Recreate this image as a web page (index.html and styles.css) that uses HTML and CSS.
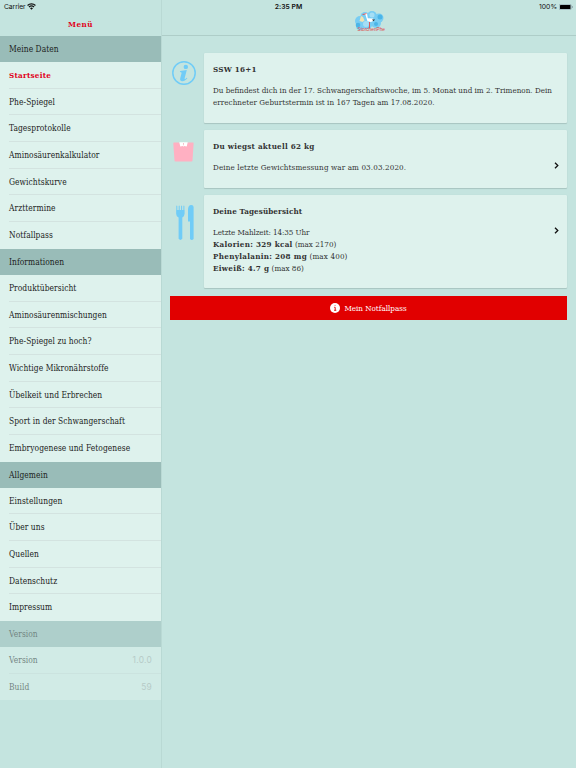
FILE: index.html
```html
<!DOCTYPE html>
<html lang="de">
<head>
  <meta charset="UTF-8">
  <meta name="viewport" content="width=device-width, initial-scale=1.0">
  <title>StorchenPhe</title>
  <link rel="stylesheet" href="styles.css">
</head>
<body>
  <div class="status">
    <span class="carrier">Carrier
      <svg class="wifi" viewBox="0 0 16 12"><path d="M1 4.2a10 10 0 0 1 14 0M3.5 7a6.4 6.4 0 0 1 9 0" fill="none" stroke="#111" stroke-width="2.2"/><path d="M5.4 9a3.7 3.7 0 0 1 5.2 0L8 11.8z" fill="#111"/></svg>
    </span>
    <span class="time">2:35 PM</span>
    <span class="battery">100%
      <svg viewBox="0 0 28 12"><rect x=".5" y=".5" width="24" height="11" rx="2.5" fill="none" stroke="#789"/><rect x="2" y="2" width="21" height="8" rx="1" fill="#000"/><path d="M26 4q3 2 0 4z" fill="#678"/></svg>
    </span>
  </div>

  <div class="app">
    <aside class="menu">
      <header class="bar"><h1>Menü</h1></header>
      <h2>Meine Daten</h2>
      <ul>
        <li class="active"><span>Startseite</span></li>
        <li><span>Phe-Spiegel</span></li>
        <li><span>Tagesprotokolle</span></li>
        <li><span>Aminosäurenkalkulator</span></li>
        <li><span>Gewichtskurve</span></li>
        <li><span>Arzttermine</span></li>
        <li><span>Notfallpass</span></li>
      </ul>
      <h2>Informationen</h2>
      <ul>
        <li><span>Produktübersicht</span></li>
        <li><span>Aminosäurenmischungen</span></li>
        <li><span>Phe-Spiegel zu hoch?</span></li>
        <li><span>Wichtige Mikronährstoffe</span></li>
        <li><span>Übelkeit und Erbrechen</span></li>
        <li><span>Sport in der Schwangerschaft</span></li>
        <li><span>Embryogenese und Fetogenese</span></li>
      </ul>
      <h2>Allgemein</h2>
      <ul>
        <li><span>Einstellungen</span></li>
        <li><span>Über uns</span></li>
        <li><span>Quellen</span></li>
        <li><span>Datenschutz</span></li>
        <li><span>Impressum</span></li>
      </ul>
      <div class="disabled">
        <h2>Version</h2>
        <ul>
          <li><span>Version</span><em>1.0.0</em></li>
          <li><span>Build</span><em>59</em></li>
        </ul>
      </div>
    </aside>

    <main>
      <header class="bar">
        <svg class="logo" viewBox="0 0 32 22">
          <g fill="#78cdf3"><circle cx="6" cy="10" r="5"/><circle cx="11" cy="5.5" r="4.5"/><circle cx="18" cy="5" r="5"/><circle cx="25" cy="7" r="4.5"/><circle cx="22" cy="12" r="5"/><circle cx="13" cy="12" r="6"/><circle cx="6" cy="15" r="4"/></g>
          <g fill="#4bb5e8"><circle cx="26" cy="6" r="2.5"/><circle cx="4" cy="14" r="2.3"/><circle cx="22" cy="13" r="2"/></g>
          <g fill="#a5def5"><circle cx="18" cy="4" r="2.5"/><circle cx="12" cy="13" r="3"/></g>
          <path d="M7 5l2 1 1.500 3.500-2 1.500-3-1z" fill="#efe3b4"/>
          <path d="M10.500 2l2.500.2.800 5 5.200.3 1 2-3 1.500-3.500-.8L11.500 4z" fill="#fff"/>
          <path d="M18 8.500h3l-1.500 1.800z" fill="#222"/>
          <path d="M8.500 3.600l4-1M15.500 11v6" stroke="#e34b4b" stroke-width=".9" fill="none"/>
          <text x="3.500" y="19.500" textLength="27.500" lengthAdjust="spacingAndGlyphs">StorchenPhe</text>
        </svg>
      </header>

      <div class="content">
        <section class="entry">
          <svg class="icon info" viewBox="0 0 24 24"><circle cx="12" cy="12" r="11.2" fill="none" stroke="#70ccf7" stroke-width="1.500"/><circle cx="13.800" cy="5.900" r="2.200" fill="#70ccf7"/><path d="M8.200 10l6.600-.9-2.100 8q-.3 1.400.6.900l1.500-1.300.6.600c-2 2.300-3.800 3.200-5.500 2.900-2-.3-2-1.900-1.600-3.300l1.300-4.800-.5-.9-1.200-.1z" fill="#70ccf7"/></svg>
          <div class="card">
            <h3>SSW 16+1</h3>
            <p><span class="line">Du befindest dich in der 17. Schwangerschaftswoche, im 5. Monat und im 2. Trimenon. Dein</span>
            <span class="line due">errechneter Geburtstermin ist in 167 Tagen am 17.08.2020.</span></p>
          </div>
        </section>

        <section class="entry weight">
          <svg class="icon scale" viewBox="0 0 21 20"><path d="M1 .5h5.500l1 3.300h6l1-3.300H20q.8 0 .6 1l-1.100 17q-.1 1-1 1h-16q-1 0-1-1L.3 1.500Q.2.500 1 .5z" fill="#ffb0c2"/><path d="M6.300.2h8.400l-1 4.400-2.600-.7-.6.800-.6-.8-2.600.7z" fill="#fff"/><path d="M10.100 1.200l.4 2.800.5-2.800z" fill="#ef91a8"/></svg>
          <div class="card">
            <h3>Du wiegst aktuell 62 kg</h3>
            <p><span class="line measured">Deine letzte Gewichtsmessung war am 03.03.2020.</span></p>
            <svg class="arrow" viewBox="0 0 5 7"><path d="M1 .7l2.800 2.800L1 6.300"/></svg>
          </div>
        </section>

        <section class="entry meals">
          <svg class="icon cutlery" viewBox="0 0 18 36"><path d="M.3 1q.5-1 1 0v5.500h1.400V1q.5-1 1 0v5.500h1.400V1q.5-1 1 0v5.500h1.300V1q.5-1 1 0v8.500q0 2-2.100 3v21.300q-1.900 2.200-3.700 0V12.500Q.3 11.500.3 9.500zM17.600 34q-1.800 2.200-3.600 0V16.500h-2V5q0-5 3.200-5 2.400 0 2.400 2z" fill="#70ccf7"/><path d="M.5 5h7.800v4H.5z" fill="#70ccf7"/></svg>
          <div class="card">
            <h3>Deine Tagesübersicht</h3>
            <p>
              <span class="line last-meal">Letzte Mahlzeit: 14:35 Uhr</span>
              <span class="line"><b>Kalorien: 329 kcal</b> (max 2170)</span>
              <span class="line max"><b>Phenylalanin: 208 mg</b> (max 400)</span>
              <span class="line"><b>Eiweiß: 4.7 g</b> (max 86)</span>
            </p>
            <svg class="arrow" viewBox="0 0 5 7"><path d="M1 .7l2.800 2.800L1 6.300"/></svg>
          </div>
        </section>

        <button class="pass">
          <svg viewBox="0 0 10 10"><circle cx="5" cy="5" r="5" fill="#fff"/><path d="M4.200 4.300h1v3M4.100 7.300h2.200M4.700 2.400h.7" fill="none" stroke="#e10000" stroke-width=".9"/></svg>
          <span>Mein Notfallpass</span>
        </button>
      </div>
    </main>
  </div>
</body>
</html>
```
FILE: styles.css
```css
* { box-sizing: border-box; }
body { margin: 0; height: 768px; overflow: hidden; background: #c4e4df; color: #1c1c1c; font-family: "DejaVu Serif Condensed", "DejaVu Serif", serif; font-stretch: condensed; font-size: 8px; }
h1, h2, h3, p, ul { margin: 0; padding: 0; font-size: inherit; }

.status { position: absolute; top: 0; left: 0; right: 0; display: grid; grid-template-columns: 1fr 1fr 1fr; padding: 0 3px 0 4px; height: 12px; line-height: 13px; font-family: Inter, sans-serif; font-stretch: normal; font-size: 6.8px; color: #111; }
.carrier { letter-spacing: -.1px; }
.wifi { width: 9px; height: 7px; vertical-align: -1px; }
.time { text-align: center; font-weight: 600; letter-spacing: .05px; }
.battery { text-align: right; }
.battery svg { width: 14px; height: 6px; vertical-align: -1px; }

.app { display: flex; height: 768px; }
.bar { height: 36px; display: flex; justify-content: center; }
.menu { width: 161px; flex: none; font-size: 8.4px; letter-spacing: .05px; }
.menu h1 { color: #e00019; font-size: 8px; line-height: 12px; padding-top: 18px; letter-spacing: .5px; }
.menu h2 { height: 26px; line-height: 27px; padding-left: 9px; background: #99bcb8; font-weight: normal; }
.menu ul { list-style: none; background: #def2ed; padding-left: 9px; }
.menu li { height: 26.7px; line-height: 27.4px; display: flex; justify-content: space-between; padding-right: 9px; border-bottom: 1px solid #d3e3e0; }
.menu li:last-child { border-bottom: 0; }
.menu .active { color: #e00019; font-weight: bold; font-size: 8px; letter-spacing: .25px; }
.menu em { font-family: Inter, sans-serif; font-stretch: normal; font-style: normal; color: #888; opacity: .6; letter-spacing: .25px; }
.disabled { opacity: .5; }

main { flex: 1; border-left: 1px solid #b9d9d4; }
main .bar { border-bottom: 1px solid #aecdc8; }
.logo { width: 32px; height: 22px; margin-top: 11px; overflow: visible; }
.logo text { font: 5.5px "Liberation Sans", sans-serif; fill: #df4048; }

.content { padding: 17px 10px 0 8px; }
.entry { display: grid; grid-template-columns: 34px 1fr; margin-bottom: 7px; }
.icon { display: block; }
.info { width: 24px; height: 24px; margin: 8px 0 0 2px; }
.scale { width: 21px; height: 20px; margin: 12px 0 0 3px; }
.cutlery { width: 18px; height: 36px; margin: 10px 0 0 6px; }
.card { position: relative; height: 70px; padding: 10px 9px; background: #def2ed; border-radius: 1px; box-shadow: 0 1px 1px #a8c5c0, 0 0 1px #b4d0cb; color: #333; }
.weight .card { height: 58px; }
.meals .card { height: 93px; }
.meals { margin-bottom: 8px; }
.card h3 { line-height: 12px; margin-bottom: 10px; letter-spacing: .25px; }
.meals h3 { letter-spacing: .1px; }
.card p { line-height: 11.9px; }
.line { display: block; white-space: nowrap; }
.due { letter-spacing: .04px; }
.measured { letter-spacing: .12px; }
.last-meal { letter-spacing: -.1px; }
.max { letter-spacing: .15px; }
.card b { letter-spacing: .3px; }
.arrow { position: absolute; right: 8px; top: 32px; width: 5px; height: 7px; fill: none; stroke: #111; stroke-width: 1.3; }

.pass { display: flex; align-items: center; justify-content: center; gap: 4px; width: 397px; height: 24px; padding: 0; border: 0; background: #e10000; color: #fff; font: inherit; }
.pass svg { width: 10px; height: 10px; }
```
